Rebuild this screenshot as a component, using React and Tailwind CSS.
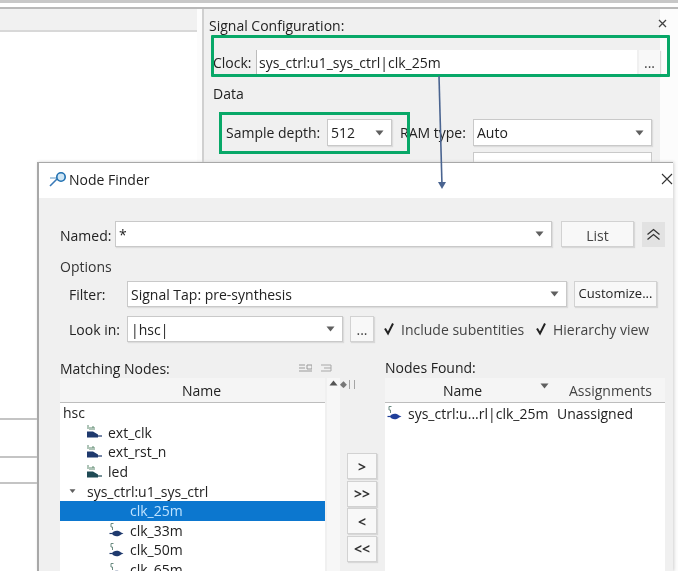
import React from "react";

function Arrow({ className = "" }) {
  return (
    <svg width="9" height="6" viewBox="0 0 9 6" className={className}>
      <path d="M0.5 0.5h8L4.5 5.5z" fill="#5f5f5f" />
    </svg>
  );
}

function SignalIcon({ color = "#1f3a6e" }) {
  return (
    <svg width="16" height="16" viewBox="0 0 16 16" className="shrink-0">
      <path d="M2 1.5h2.5M2 1.5v3.5h1.5v3" stroke="#6a8a80" strokeWidth="1" fill="none" />
      <path d="M3 11.5c1-3.4 7-3.6 9-1l2.5 1-2.5 1c-2 2.6-8 2.4-9-1z" fill={color} />
      <path d="M0.5 11.5h3" stroke={color} strokeWidth="1.2" />
    </svg>
  );
}

function PinIcon({ color = "#1f3a6e", top = "#5f8a70" }) {
  return (
    <svg width="17" height="16" viewBox="0 0 17 16" className="shrink-0">
      <path d="M2 1v4M4 3v3M6 3h2v3M6 3v3" stroke={top} strokeWidth="1" fill="none" />
      <path d="M1 7.5h6l5 3v3H1z" fill={color} />
      <path d="M12 12h4" stroke={color} strokeWidth="1.2" />
    </svg>
  );
}

function Combo({ children, className = "" }) {
  return (
    <div className={`flex items-center justify-between border border-[#c9c9c9] bg-white pl-[3px] pr-[7px] shadow-[1px_1px_1px_#dcdcdc] ${className}`}>
      <span className="truncate">{children}</span>
      <Arrow />
    </div>
  );
}

function Btn({ children, className = "" }) {
  return (
    <div className={`flex items-center justify-center border border-[#d2d2d2] bg-[#f8f8f8] shadow-[1px_1px_1px_#d8d8d8] ${className}`}>
      {children}
    </div>
  );
}

function Check({ children, className = "" }) {
  return (
    <div className={`flex items-center ${className}`}>
      <svg width="14" height="14" viewBox="0 0 14 14" className="shrink-0">
        <path d="M3 6.5l3 5 5-10" stroke="#222" strokeWidth="2" fill="none" />
      </svg>
      <span className="ml-[5px] whitespace-nowrap text-[#444]">{children}</span>
    </div>
  );
}

function TreeRow({ icon, indent, children, selected }) {
  return (
    <div
      style={{ paddingLeft: indent }}
      className={`flex h-[19.6px] shrink-0 items-center gap-[5px] whitespace-nowrap ${selected ? "bg-[#0c77cf] text-[#bfe3ff]" : ""}`}
    >
      {icon}
      <span>{children}</span>
    </div>
  );
}

export default function App() {
  return (
    <div className="relative flex h-[571px] w-[678px] flex-col overflow-hidden bg-[#fcfcfc] font-['Open_Sans',sans-serif] text-[14px] text-[#222] blur-[0.4px]">
      {/* window chrome at the very top */}
      <div className="h-[9px] shrink-0 border-b-2 border-[#b9b9b9] bg-white">
        <div className="h-[3px] bg-[#c8c8c8]" />
      </div>

      <div className="flex min-h-0 flex-1">
        {/* left panel */}
        <div className="flex w-[197px] shrink-0 flex-col bg-white">
          <div className="h-[23px] shrink-0 border-b-2 border-[#d8d8d8] bg-[#f1f1f1]" />
          <div className="h-[388px] shrink-0 border-b-2 border-[#c4c4c4]" />
          <div className="h-[38px] shrink-0 border-b-2 border-[#c4c4c4]" />
          <div className="h-[26px] shrink-0 border-b-2 border-[#c4c4c4]" />
          <div className="flex-1" />
        </div>

        {/* signal configuration panel */}
        <div className="ml-[5px] flex h-full w-[458px] shrink-0 flex-col border-l-2 border-[#d0d0d0] bg-[#f0f0f0] pl-[5px]">
          <div className="mt-[6px] flex h-[20px] items-center justify-between whitespace-nowrap">
            <span>Signal Configuration:</span>
          </div>
          <div className="mt-[14px] flex h-[27px] items-center pl-[4px]">
            <span className="w-[43px]">Clock:</span>
            <div className="flex h-[26px] w-[381px] items-center border-l border-[#bcbcbc] bg-white pl-[2px]">
              sys_ctrl:u1_sys_ctrl|clk_25m
            </div>
            <Btn className="ml-[2px] h-[26px] w-[21px] border-0 text-[#444]">...</Btn>
          </div>
          <div className="mt-[8px] h-[20px] pl-[4px] leading-[20px]">Data</div>
          <div className="mt-[15px] flex h-[27px] items-center pl-[17px]">
            <span className="w-[101px] whitespace-nowrap">Sample depth:</span>
            <Combo className="h-[27px] w-[65px]">512</Combo>
            <span className="ml-[8px] w-[73px] whitespace-nowrap">RAM type:</span>
            <Combo className="h-[27px] w-[179px]">Auto</Combo>
          </div>
          <div className="ml-[264px] mt-[6px] h-[20px] w-[179px] border border-[#c9c9c9] bg-white" />
        </div>
      </div>

      {/* panel close button */}
      <svg width="9" height="9" viewBox="0 0 9 9" className="absolute left-[658px] top-[19px]">
        <path d="M1 1l7 7M8 1L1 8" stroke="#444" strokeWidth="1.3" />
      </svg>

      {/* green annotation boxes */}
      <div className="absolute left-[211px] top-[35px] h-[42px] w-[459px] rounded-[1px] border-[3px] border-[#08a868]" />
      <div className="absolute left-[219px] top-[112px] h-[42px] w-[191px] border-[3px] border-[#08a868]" />

      {/* Node Finder dialog */}
      <div className="absolute left-[37px] top-[162px] flex h-[409px] w-[636px] flex-col border-l-2 border-t border-[#a8a8a8] bg-[#f0f0f0] shadow-[1px_0_3px_#d0d0d0]">
        <div className="flex h-[35px] shrink-0 items-center justify-between bg-white pb-[3px] pl-[10px] text-[14px]">
          <div className="flex items-center gap-[2px]">
            <svg width="18" height="16" viewBox="0 0 18 16">
              <path d="M1 15l7-7" stroke="#3a7ab8" strokeWidth="1.6" />
              <path d="M1 7h8" stroke="#8ab4d4" strokeWidth="1.4" />
              <circle cx="12" cy="6" r="4.2" fill="#cfe6f5" stroke="#1f6fb0" strokeWidth="1.6" />
            </svg>
            <span>Node Finder</span>
          </div>
          <svg width="12" height="12" viewBox="0 0 12 12">
            <path d="M1 1l10 10M11 1L1 11" stroke="#333" strokeWidth="1.1" />
          </svg>
        </div>

        <div className="flex min-h-0 flex-1 flex-col pl-[21px]">
          {/* named */}
          <div className="mt-[23px] flex h-[26px] shrink-0 items-center">
            <span className="w-[55px] pt-[3px]">Named:</span>
            <Combo className="h-[26px] w-[437px]">*</Combo>
            <Btn className="ml-[9px] h-[26px] w-[73px] pt-[3px] text-[#444]">List</Btn>
            <div className="ml-[8px] flex h-[25px] w-[23px] items-center justify-center bg-[#e2e2e2]">
              <svg width="15" height="13" viewBox="0 0 15 13">
                <path d="M1.5 6.5l6-5 6 5M1.5 11.5l6-5 6 5" stroke="#333" strokeWidth="1.3" fill="none" />
              </svg>
            </div>
          </div>

          <div className="mt-[10px] h-[20px] shrink-0 leading-[20px] text-[#333]">Options</div>

          <div className="mt-[4px] flex h-[26px] shrink-0 items-center pl-[9px]">
            <span className="w-[58px]">Filter:</span>
            <Combo className="h-[26px] w-[440px] bg-[#f8f8f8]">Signal Tap: pre-synthesis</Combo>
            <Btn className="ml-[7px] h-[26px] w-[83px] whitespace-nowrap text-[13px]">Customize...</Btn>
          </div>

          <div className="mt-[9px] flex h-[26px] shrink-0 items-center pl-[9px]">
            <span className="w-[58px] whitespace-nowrap">Look in:</span>
            <Combo className="h-[26px] w-[216px]">|hsc|</Combo>
            <Btn className="ml-[7px] h-[26px] w-[24px] text-[#444]">...</Btn>
            <Check className="ml-[8px] w-[152px]">Include subentities</Check>
            <Check>Hierarchy view</Check>
          </div>

          {/* lists */}
          <div className="mt-[16px] flex min-h-0 flex-1">
            <div className="flex w-[280px] shrink-0 flex-col">
              <div className="flex h-[20px] shrink-0 items-center justify-between pr-[8px]">
                <span className="whitespace-nowrap">Matching Nodes:</span>
                <div className="flex gap-[9px]">
                  <svg width="13" height="9" viewBox="0 0 13 9">
                    <path d="M0 1h6M0 4h6M0 7h13M8 1h5v4H8z" stroke="#9a9a9a" strokeWidth="1" fill="none" />
                  </svg>
                  <svg width="11" height="9" viewBox="0 0 11 9">
                    <path d="M0 1h10M3 4h7M0 7h10M10 1v6" stroke="#a8a8a8" strokeWidth="1" fill="none" />
                  </svg>
                </div>
              </div>
              <div className="flex min-h-0 flex-1">
                <div className="flex w-[265px] shrink-0 flex-col overflow-hidden bg-white">
                  <div className="flex h-[25px] shrink-0 items-center justify-center border-b border-[#bdbdbd] bg-[#f5f5f5] pl-[18px]">Name</div>
                  <TreeRow indent={3}>hsc</TreeRow>
                  <TreeRow indent={26} icon={<PinIcon />}>ext_clk</TreeRow>
                  <TreeRow indent={26} icon={<PinIcon />}>ext_rst_n</TreeRow>
                  <TreeRow indent={26} icon={<PinIcon color="#1f4a55" />}>led</TreeRow>
                  <div className="flex h-[19.6px] shrink-0 items-center whitespace-nowrap pl-[8px]">
                    <Arrow className="scale-75" />
                    <span className="ml-[10px]">sys_ctrl:u1_sys_ctrl</span>
                  </div>
                  <TreeRow indent={70} selected>clk_25m</TreeRow>
                  <TreeRow indent={49} icon={<SignalIcon />}>clk_33m</TreeRow>
                  <TreeRow indent={49} icon={<SignalIcon />}>clk_50m</TreeRow>
                  <TreeRow indent={49} icon={<SignalIcon />}>clk_65m</TreeRow>
                </div>
                <div className="ml-[2px] flex w-[13px] shrink-0 flex-col items-center bg-[#f7f7f7] pt-[2px]">
                  <svg width="9" height="6" viewBox="0 0 9 6">
                    <path d="M0.5 5.5h8L4.5 0.5z" fill="#555" />
                  </svg>
                </div>
              </div>
            </div>

            <div className="ml-[4px] flex w-[40px] shrink-0 flex-col">
              <span className="ml-[-4px] mt-[20px] h-[12px] text-[9px] leading-[12px] text-[#777]">◆||</span>
              <div className="ml-[3px] mt-[63px] flex flex-col gap-[1.5px] font-bold text-[#333]">
                <Btn className="h-[26px] w-[30px]">&gt;</Btn>
                <Btn className="h-[26px] w-[30px]">&gt;&gt;</Btn>
                <Btn className="h-[26px] w-[30px]">&lt;</Btn>
                <Btn className="h-[26px] w-[30px]">&lt;&lt;</Btn>
              </div>
            </div>

            <div className="ml-[1px] flex w-[280px] shrink-0 flex-col">
              <div className="h-[20px] shrink-0 leading-[20px]">Nodes Found:</div>
              <div className="flex min-h-0 flex-1 flex-col bg-white">
                <div className="flex h-[25px] shrink-0 items-center border-b border-[#bdbdbd] bg-[#f5f5f5]">
                  <div className="flex w-[184px] items-center justify-between pl-[58px] pr-[20px]">
                    <span>Name</span>
                    <Arrow className="-translate-y-[4px]" />
                  </div>
                  <span className="text-[#444]">Assignments</span>
                </div>
                <div className="flex h-[20px] items-center whitespace-nowrap pl-[2px]">
                  <SignalIcon color="#1f3f9a" />
                  <span className="ml-[5px] w-[149px]">sys_ctrl:u...rl|clk_25m</span>
                  <span>Unassigned</span>
                </div>
              </div>
            </div>
          </div>
        </div>
      </div>

      {/* annotation arrow from clock field to dialog */}
      <svg width="14" height="120" viewBox="0 0 14 120" className="absolute left-[435px] top-[76px]">
        <path d="M4 0l3 110" stroke="#4a6490" strokeWidth="1.6" />
        <path d="M3 106h8l-4 7z" fill="#4a6490" />
      </svg>
    </div>
  );
}
